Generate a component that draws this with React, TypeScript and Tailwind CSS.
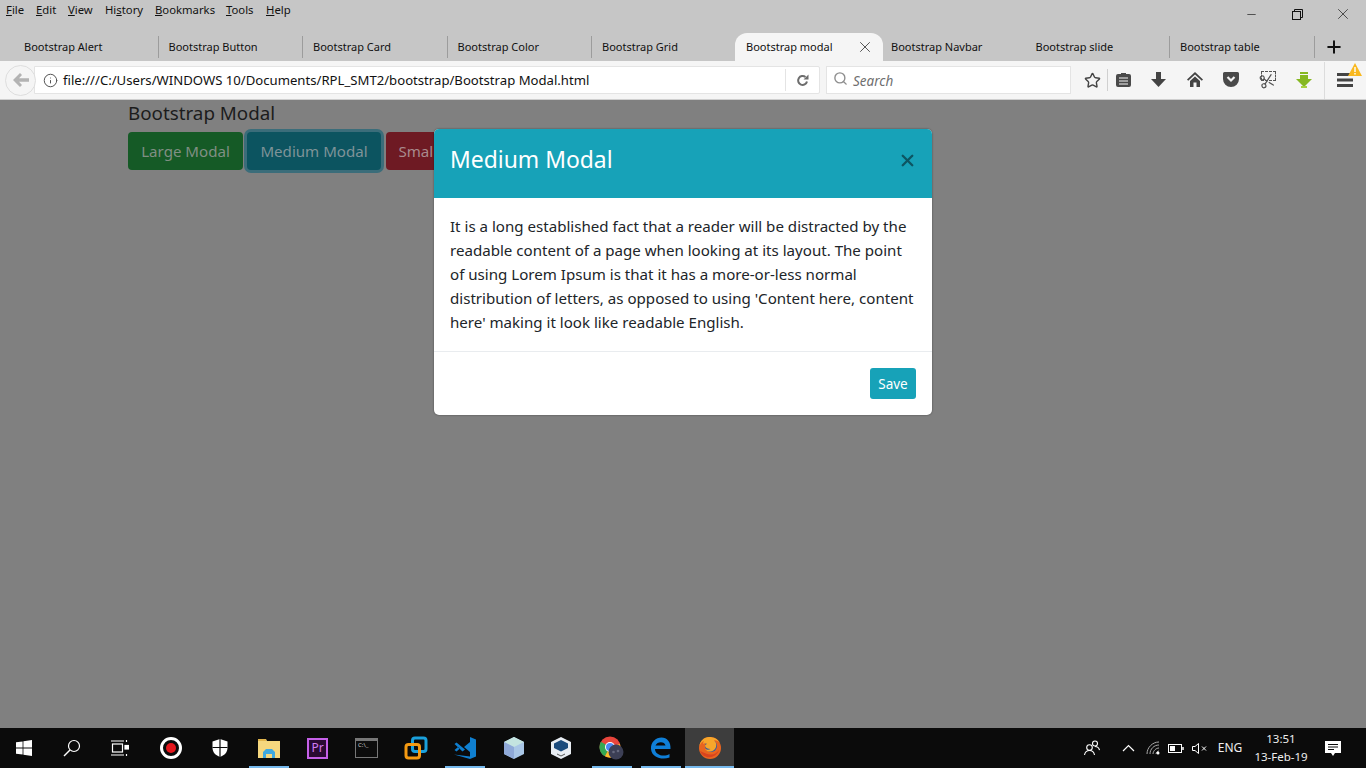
import { Info, Search, Star, X, Plus, Minus, Scissors } from 'lucide-react';

const ui = { fontFamily: '"Noto Sans", "Open Sans", sans-serif' };

const menus = [
  { before: '', key: 'F', after: 'ile', w: 'w-[30px]' },
  { before: '', key: 'E', after: 'dit', w: 'w-[32px]' },
  { before: '', key: 'V', after: 'iew', w: 'w-[37px]' },
  { before: 'Hi', key: 's', after: 'tory', w: 'w-[50px]' },
  { before: '', key: 'B', after: 'ookmarks', w: 'w-[71px]' },
  { before: '', key: 'T', after: 'ools', w: 'w-[40px]' },
  { before: '', key: 'H', after: 'elp', w: 'w-[40px]' },
];

const tabs = [
  'Bootstrap Alert',
  'Bootstrap Button',
  'Bootstrap Card',
  'Bootstrap Color',
  'Bootstrap Grid',
  'Bootstrap modal',
  'Bootstrap Navbar',
  'Bootstrap slide',
  'Bootstrap table',
];

function WindowsLogo() {
  return (
    <svg width="16" height="16" viewBox="0 0 16 16" fill="#fff">
      <path d="M0 2.300 6.600 1.400V7.600H0ZM7.400 1.300 16 0V7.600H7.400ZM0 8.400H6.600V14.600L0 13.700ZM7.400 8.400H16V16L7.400 14.700Z" />
    </svg>
  );
}

function ExplorerIcon() {
  return (
    <svg width="22" height="20" viewBox="0 0 22 20">
      <path d="M0 1h8l1 2h13v17H0Z" fill="#f5d77e" />
      <path d="M0 1h8v2H0Z" fill="#e2b64d" />
      <path d="M5 20v-6l3-3h6l3 3v6h-3v-4H8v4Z" fill="#3fa9e0" />
    </svg>
  );
}

function ChromeIcon() {
  return (
    <svg width="26" height="24" viewBox="0 0 26 24">
      <circle cx="11" cy="11" r="10.500" fill="#e8453c" />
      <path d="M11 11 1.900 5.800A10.500 10.500 0 0 0 6 20.300Z" fill="#34a853" />
      <path d="M11 11 21 8A10.500 10.500 0 0 1 6 20.300Z" fill="#fbc02d" />
      <circle cx="11" cy="11" r="5" fill="#fff" />
      <circle cx="11" cy="11" r="4" fill="#4a89f3" />
      <circle cx="17" cy="16" r="7.500" fill="#3c3f55" />
      <circle cx="14.500" cy="16" r="1.300" fill="#66697e" />
      <circle cx="19" cy="15" r="1.300" fill="#66697e" />
    </svg>
  );
}

function FirefoxIcon() {
  return (
    <svg width="24" height="24" viewBox="0 0 24 24">
      <circle cx="12" cy="12" r="11" fill="#e8651f" />
      <circle cx="13" cy="10" r="6" fill="#2b5aa8" />
      <path d="M1.500 10C2 5 6 1 11 1c5 0 9 2 11 6-2-2-4-3-6-2.500 3 2 3 7 0 9.500-3 2.500-7 2-9-1 2 1 4 1 5.500 0-3 0-5-1-5.500-3 0-1 1-2 2-2-1-1-3-1-4 0 0-1 .5-2 1-3C4 5.500 2.500 7.500 1.500 10Z" fill="#f7a62b" />
      <path d="M2 15c2 5 7 7 11 6 4-.7 7-3.500 8-7-2 3-5 5-9 4.500C8 18 5 16 2 15Z" fill="#d9431e" />
    </svg>
  );
}

const taskbarApps = [
  { node: <div className="w-[22px] h-[22px] rounded-full border-[3px] border-white flex items-center justify-center"><div className="w-[10px] h-[10px] rounded-full bg-[#e5161c]" /></div>, open: false },
  { node: <svg width="18" height="20" viewBox="0 0 18 20" fill="#fff"><path d="M9 1 16.500 3.500V10C16.500 14.500 13 17.500 9 19 5 17.500 1.500 14.500 1.500 10V3.500Z" /><path d="M9 1V19M1.500 9.500H16.500" stroke="#0b0b0b" strokeWidth="1.200" /></svg>, open: false },
  { node: <ExplorerIcon />, open: true },
  { node: <div className="w-[21px] h-[21px] bg-[#2a0a33] border-2 border-[#c560e8] flex items-center justify-center text-[12px] leading-none text-[#d27cf0]">Pr</div>, open: false },
  { node: <div className="w-[23px] h-[20px] bg-[#0c0c0c] border border-[#777] border-t-[3px] flex items-start pl-[2px] text-[6px] leading-[8px] text-[#ccc]">C:\_</div>, open: false },
  { node: <svg width="24" height="24" viewBox="0 0 24 24" fill="none" strokeWidth="3"><rect x="8.500" y="2" width="13.500" height="13.500" rx="2.500" stroke="#1aa0dc" /><rect x="2" y="8.500" width="13.500" height="13.500" rx="2.500" stroke="#f59a12" /></svg>, open: false },
  { node: <svg width="24" height="24" viewBox="0 0 24 24" fill="#0f7fd0"><path d="M17 1 23 3.500V20.500L17 23 1 18.500 17 20.500ZM17 6 11 11 17 16Z" /><path d="M1.500 8 3.500 6.500 12 13.500 9.500 15.500ZM1.500 14 3.500 15.500 7 12.500 5 11Z" /></svg>, open: true },
  { node: <svg width="22" height="24" viewBox="0 0 22 24"><path d="M11 1 21 6V18L11 23 1 18V6Z" fill="#a9c6e6" /><path d="M11 1 21 6 11 11 1 6Z" fill="#c4e4e0" /><path d="M1 6 11 11V23L1 18Z" fill="#8fa9d8" /></svg>, open: false },
  { node: <svg className="-ml-[4px]" width="22" height="24" viewBox="0 0 22 24"><path d="M11 1 21 6V18L11 23 1 18V6Z" fill="#e8edf3" /><path d="M11 4 18 7.500V12L11 15.500 4 12V7.500Z" fill="#1b4b7d" /><path d="M7 18 11 20 15 18" stroke="#555" fill="none" /></svg>, open: false },
  { node: <ChromeIcon />, open: true },
  { node: <svg width="22" height="24" viewBox="0 0 22 24" fill="none"><path d="M20.500 13H5C5 19 14 21.500 19.500 18V21.500C13 24 2 22.500 1 13 .5 6 6 1.500 11.500 1.500 17 1.500 21 6 20.500 13ZM5.500 9.500H15.500C15 5 7 5 5.500 9.500Z" fill="#0f7fd8" /></svg>, open: true },
  { node: <FirefoxIcon />, open: true, active: true },
];

function TabStrip() {
  return (
    <div className="flex h-[28px] pl-[14px] items-stretch text-[11px] text-[#111]">
      {tabs.map((t, i) => {
        const active = i === 5;
        const hideLine = i === 4 || i === 5 || i === 6;
        return active ? (
          <div key={t} className="w-[148px] -ml-[1.500px] -mr-[2px] bg-[#f5f5f5] rounded-t-[12px] flex items-center justify-between pl-[11px] pr-[9px]">
            <span>{t}</span>
            <X size={18} strokeWidth={1.200} color="#444" />
          </div>
        ) : (
          <div key={t} className="relative w-[144.500px] flex items-center pl-[10px]">
            <span>{t}</span>
            {!hideLine && <div className="absolute right-0 top-[3px] h-[22px] w-px bg-[#9c9c9c]" />}
          </div>
        );
      })}
      <div className="flex-1 flex items-center pl-[9px]">
        <Plus size={20} strokeWidth={2.400} color="#111" />
      </div>
    </div>
  );
}

function Toolbar() {
  return (
    <div className="h-[39px] bg-[#f5f5f5] border-b border-[#cfcfcf] flex items-center">
      <div className="relative z-10 ml-[5px] w-[31px] h-[31px] rounded-full bg-[#f5f5f5] border border-[#dedede] flex items-center justify-center">
        <svg width="16" height="14" viewBox="0 0 16 14" fill="#b3b3b3"><path d="M7 0 9 2 6 5.200H16V8.800H6L9 12 7 14 0 7Z" /></svg>
      </div>
      <div className="-ml-[2px] w-[786px] h-[28px] bg-white border border-[#e4e4e4] rounded-r-[2px] flex items-center">
        <Info size={15} strokeWidth={1.600} color="#555" className="ml-[8px]" />
        <span className="ml-[5px] pt-[2px] flex-1 text-[13.150px] text-[#111] whitespace-nowrap">file:///C:/Users/WINDOWS 10/Documents/RPL_SMT2/bootstrap/Bootstrap Modal.html</span>
        <div className="h-[22px] w-px bg-[#e4e4e4]" />
        <div className="w-[33px] flex justify-center">
          <svg width="13" height="13" viewBox="0 0 13 13" fill="none"><path d="M11 7.500A4.500 4.500 0 1 1 9.500 3" stroke="#6d6d6d" strokeWidth="2" /><path d="M7.500 5.500H12.500V.5Z" fill="#6d6d6d" /></svg>
        </div>
      </div>
      <div className="ml-[6px] w-[245px] h-[28px] bg-white border border-[#e4e4e4] flex items-center pl-[6px]">
        <Search size={15} strokeWidth={2.200} color="#8e8e8e" className="-mt-[3px]" />
        <span className="ml-[5px] pt-[2px] text-[13.500px] italic text-[#6f6f6f]">Search</span>
      </div>
      <div className="w-[42px] flex justify-center">
        <Star size={17} strokeWidth={2} color="#444" />
      </div>
      <div className="-ml-[6px] h-[22px] w-px bg-[#d0d0d0]" />
      <div className="flex">
        <div className="w-[30px] flex justify-center">
          <svg width="15" height="15" viewBox="0 0 15 15"><path d="M2 2H5V1H10V2H13A2 2 0 0 1 15 4V13A2 2 0 0 1 13 15H2A2 2 0 0 1 0 13V4A2 2 0 0 1 2 2Z" fill="#4a4a4a" /><path d="M3 6H12M3 9H12M3 12H12" stroke="#f5f5f5" /></svg>
        </div>
        <div className="w-[41px] flex justify-center">
          <svg width="15" height="15" viewBox="0 0 15 15" fill="#444"><path d="M5 0H10V7H15L7.500 15 0 7H5Z" /></svg>
        </div>
        <div className="w-[31px] flex justify-center">
          <svg width="16" height="15" viewBox="0 0 16 15" fill="#444"><path d="M8 0 16 7.500 14.800 8.700 8 2.500 1.200 8.700 0 7.500Z" /><path d="M3 9 8 4.500 13 9V15H9.500V10.500H6.500V15H3Z" /></svg>
        </div>
        <div className="w-[41px] flex justify-center">
          <svg width="16" height="15" viewBox="0 0 16 15"><path d="M1.500 0H14.500A1.500 1.500 0 0 1 16 1.500V7A8 8 0 0 1 0 7V1.500A1.500 1.500 0 0 1 1.500 0Z" fill="#4a4a4a" /><path d="M4.500 5 8 8.500 11.500 5" fill="none" stroke="#f5f5f5" strokeWidth="2.200" /></svg>
        </div>
        <div className="relative w-[32px] flex justify-center">
          <Scissors size={16} strokeWidth={1.800} color="#555" className="mt-[1px] rotate-[-12deg]" />
          <div className="absolute left-[10px] -top-[1px] w-[15px] h-[10px] border border-dashed border-[#555]" />
        </div>
        <div className="w-[41px] flex justify-center">
          <svg width="16" height="16" viewBox="0 0 16 16"><path d="M4 0H12V2H4ZM4 3H12V7H16L8 15 0 7H4Z" fill="#86b822" /><path d="M5 14H11V16H5Z" fill="#a6d040" /></svg>
        </div>
      </div>
      <div className="relative h-[37px] flex-1 border-l border-[#dcdcdc] pl-[12px] flex items-center">
        <svg width="16" height="14" viewBox="0 0 16 14" fill="#444"><path d="M0 0H16V3H0ZM0 5.500H16V8.500H0ZM0 11H16V14H0Z" /></svg>
        <svg className="absolute left-[23px] top-[1px]" width="14" height="13" viewBox="0 0 14 13"><path d="M7 0 14 13H0Z" fill="#f9b81e" /><path d="M6.300 4H7.700V9H6.300ZM6.300 10H7.700V11.500H6.300Z" fill="#fff" /></svg>
      </div>
    </div>
  );
}

function Taskbar() {
  return (
    <div className="h-[40px] bg-[#0b0b0b] flex items-stretch text-white">
      <div className="w-[48px] flex items-center justify-center"><WindowsLogo /></div>
      <div className="w-[48px] flex items-center justify-center">
        <svg width="18" height="18" viewBox="0 0 18 18" fill="none" stroke="#fff" strokeWidth="1.200"><circle cx="11" cy="7" r="5.500" /><path d="M7 11 1 17" strokeWidth="1.500" /></svg>
      </div>
      <div className="w-[48px] flex items-center justify-center">
        <svg width="18" height="16" viewBox="0 0 18 16" fill="none" stroke="#fff" strokeWidth="1.200"><rect x="1.500" y="4" width="10" height="8" /><path d="M0 1H13M0 15H13M15.500 0V2M15.500 14V16" /><rect x="14" y="5.500" width="3.500" height="3.500" fill="#fff" /></svg>
      </div>
      <div className="w-[2px]" />
      {taskbarApps.map((app, i) => (
        <div key={i} className={`relative w-[49px] flex items-center justify-center ${app.active ? 'bg-[#3d3d3d]' : ''}`}>
          {app.node}
          {app.open && <div className={`absolute bottom-0 h-[2px] bg-[#76b9ed] ${app.active ? 'inset-x-0' : 'left-[4.500px] right-[4.500px]'}`} />}
        </div>
      ))}
      <div className="flex-1" />
      <div className="flex items-center text-[#eee]">
        <div className="w-[24px] flex justify-center">
          <svg width="16" height="16" viewBox="0 0 16 16" fill="none" stroke="#fff" strokeWidth="1.100"><circle cx="5.500" cy="7.500" r="2.800" /><path d="M.5 15C1 12 3 10.500 5.500 10.500 8 10.500 10 12 10.500 15" /><circle cx="11" cy="3.500" r="2.500" /><path d="M11 6.500C13 6.500 15 8 15.500 10" /></svg>
        </div>
        <div className="w-[24px] ml-[12px] flex justify-center">
          <svg width="13" height="8" viewBox="0 0 13 8" fill="none" stroke="#fff" strokeWidth="1.200"><path d="M1 7 6.500 1.500 12 7" /></svg>
        </div>
        <div className="w-[22px] ml-[2px] flex justify-center">
          <svg width="14" height="14" viewBox="0 0 14 14" fill="none" stroke="#aaa"><path d="M1 13C1 6.500 6.500 1 13 1M4 13C4 8 8 4 13 4M7 13C7 10 10 7 13 7M10 13C10 11.500 11.500 10 13 10" /><circle cx="12" cy="12" r="1.500" fill="#fff" stroke="none" /></svg>
        </div>
        <div className="w-[24px] flex justify-center">
          <svg width="16" height="9" viewBox="0 0 16 9" fill="none" stroke="#fff"><rect x=".5" y=".5" width="13" height="8" /><rect x="2" y="2" width="5" height="5" fill="#fff" stroke="none" /><path d="M15 3V6" strokeWidth="1.500" /></svg>
        </div>
        <div className="w-[22px] flex justify-center">
          <svg width="15" height="11" viewBox="0 0 15 11" fill="none" stroke="#fff"><path d="M.5 3.500H3L6.500.5V10.500L3 7.500H.5Z" /><path d="M10 3.500 14 7.500M14 3.500 10 7.500" /></svg>
        </div>
        <div className="w-[38px] ml-[1px] text-center text-[12px]">ENG</div>
        <div className="w-[66px] -ml-[1px] text-center text-[11.500px] leading-[18px] -mt-[1px]">
          <div>13:51</div>
          <div>13-Feb-19</div>
        </div>
        <div className="w-[42px] -ml-[2px] flex justify-center">
          <svg width="16" height="15" viewBox="0 0 16 15"><path d="M0 0H16V12H10L8 15 6 12H0Z" fill="#fff" /><path d="M3 3.500H13M3 6H13M3 8.500H9" stroke="#0b0b0b" /></svg>
        </div>
        <div className="w-[12px]" />
      </div>
    </div>
  );
}

export default function App() {
  return (
    <div className="relative h-[768px] w-[1366px] overflow-hidden flex flex-col bg-[#808080]" style={ui}>
      {/* Browser frame */}
      <div className="bg-[#c6c6c6]">
        <div className="flex h-[33px] justify-between">
          <div className="flex pl-[6px] pt-[1px] text-[11.300px] text-[#111] leading-[17px]">
            {menus.map((m) => (
              <div key={m.after} className={m.w}>
                {m.before}<span className="underline">{m.key}</span>{m.after}
              </div>
            ))}
          </div>
          <div className="flex h-[28px] items-center">
            <div className="w-[46px] flex justify-center"><Minus size={13} strokeWidth={1.200} color="#111" /></div>
            <div className="w-[46px] flex justify-center">
              <svg width="11" height="11" viewBox="0 0 11 11" fill="none" stroke="#111"><path d="M2.500 2.500V.5H10.500V8.500H8.500" /><rect x=".5" y="2.500" width="8" height="8" /></svg>
            </div>
            <div className="w-[46px] flex justify-center"><X size={18} strokeWidth={0.900} color="#111" /></div>
          </div>
        </div>
        <TabStrip />
      </div>
      <Toolbar />

      {/* Page behind the backdrop */}
      <div className="flex-1 pl-[128px]">
        <h1 className="text-[18.800px] leading-[27px] text-[#1c1c1c]">Bootstrap Modal</h1>
        <div className="mt-[5px] flex">
          <button className="h-[38px] w-[115px] pt-[1px] rounded-[4px] bg-[#155a26] text-[15.100px] text-[#808f84]">Large Modal</button>
          <button className="ml-[4px] h-[38px] w-[134px] pt-[1px] rounded-[4px] bg-[#0c5460] text-[15.100px] text-[#7f9398] ring-[3px] ring-[#3b6d7a]">Medium Modal</button>
          <button className="ml-[5px] h-[38px] w-[112px] pt-[1px] rounded-[4px] bg-[#6e1a23] text-[15.100px] text-[#a88a8d]">Small Modal</button>
        </div>
      </div>

      <Taskbar />

      {/* Modal */}
      <div className="absolute left-[434px] top-[129px] w-[498px] rounded-[5px] bg-white overflow-hidden shadow-[0_0_2px_rgba(0,0,0,0.5)]">
        <div className="h-[69px] pb-[6px] bg-[#17a2b8] flex items-center justify-between pl-[16px] pr-[15px]">
          <h2 className="text-[22.900px] text-white">Medium Modal</h2>
          <X size={19} strokeWidth={3} color="#0d5562" className="-mt-[1px]" />
        </div>
        <div className="h-[153px] px-[16px] pt-[16px] text-[15.100px] leading-[24px] text-[#212529]">
          It is a long established fact that a reader will be distracted by the readable content of a page when looking at its layout. The point of using Lorem Ipsum is that it has a more-or-less normal distribution of letters, as opposed to using 'Content here, content here' making it look like readable English.
        </div>
        <div className="h-[64px] border-t border-[#e9ecef] flex items-center justify-end px-[16px]">
          <button className="h-[31px] w-[46px] pt-[1px] rounded-[3px] bg-[#17a2b8] text-[13.500px] text-white">Save</button>
        </div>
      </div>
    </div>
  );
}
